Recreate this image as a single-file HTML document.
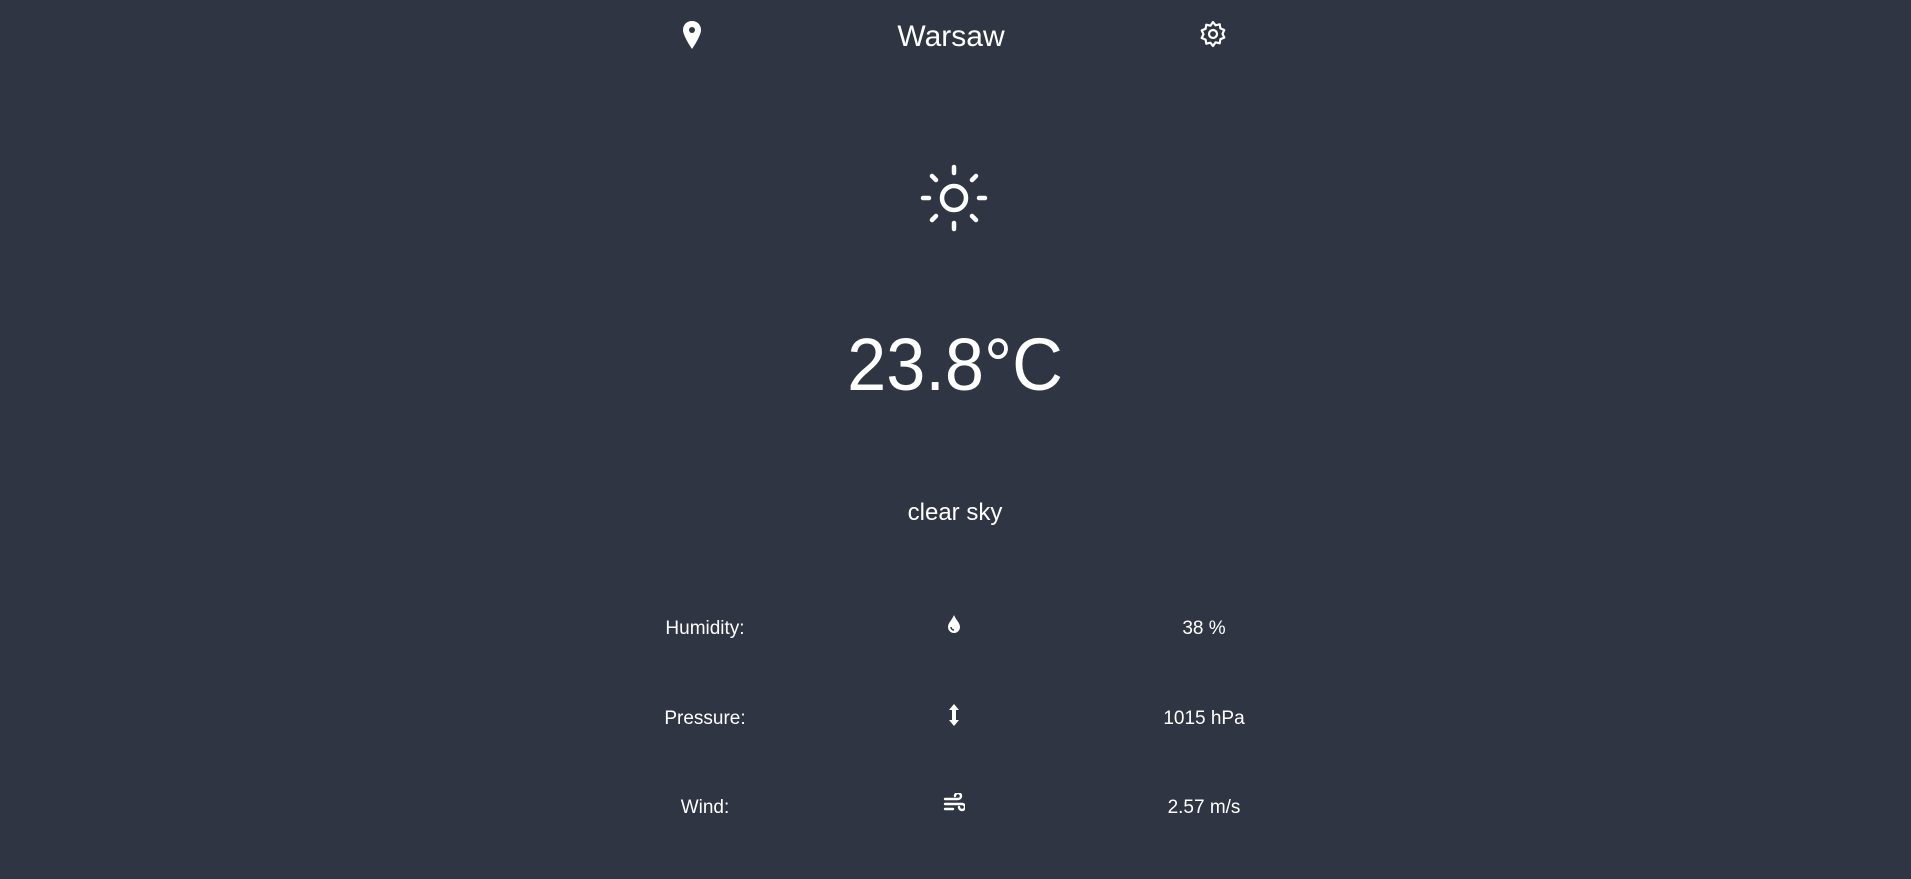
<!DOCTYPE html>
<html><head><meta charset="utf-8"><style>
html,body{margin:0;padding:0;background:#2f3542;width:1911px;height:879px;overflow:hidden;color:#fff;font-family:"Liberation Sans",sans-serif}
.a{position:absolute}
.c{transform:translateX(-50%);white-space:nowrap}
</style></head><body>
<svg class="a" style="left:680px;top:20px" width="24" height="30" viewBox="0 0 24 30"><path d="M12 1C6.5 1 3 5 3 10c0 6 9 19 9 19s9-13 9-19c0-5-3.5-9-9-9z" fill="#fff"/><circle cx="12" cy="10" r="3" fill="#2f3542"/></svg>
<div class="a c" style="left:951px;top:20px;font-size:30px">Warsaw</div>
<svg class="a" style="left:1199px;top:20px" width="28" height="28" viewBox="0 0 28 28"><path d="M14 2l2.6 3.3 4.1-1 .7 4.1 3.9 1.6-1.8 3.8 1.8 3.8-3.9 1.6-.7 4.1-4.1-1L14 26l-2.6-3.3-4.1 1-.7-4.1-3.9-1.6 1.8-3.8-1.8-3.8 3.9-1.6.7-4.1 4.1 1z" fill="none" stroke="#fff" stroke-width="2.2" stroke-linejoin="round"/><circle cx="14" cy="14" r="4" fill="none" stroke="#fff" stroke-width="2.2"/></svg>
<svg class="a" style="left:919px;top:163px" width="70" height="70" viewBox="0 0 70 70" stroke="#fff" stroke-width="4.5" stroke-linecap="round" fill="none"><circle cx="35" cy="35" r="12"/><path d="M35 4v6M35 60v6M4 35h6M60 35h6M13 13l4 4M53 53l4 4M57 13l-4 4M17 53l-4 4"/></svg>
<div class="a c" style="left:955px;top:320px;font-size:74px;line-height:90px;transform:translateX(-50%) scaleX(0.95)">23.8°C</div>
<div class="a c" style="left:955px;top:499px;font-size:24px">clear sky</div>
<div class="a c" style="left:705px;top:618px;font-size:19px">Humidity:</div>
<div class="a c" style="left:705px;top:708px;font-size:19px">Pressure:</div>
<div class="a c" style="left:705px;top:797px;font-size:19px">Wind:</div>
<div class="a c" style="left:1204px;top:618px;font-size:19px">38 %</div>
<div class="a c" style="left:1204px;top:708px;font-size:19px">1015 hPa</div>
<div class="a c" style="left:1204px;top:797px;font-size:19px">2.57 m/s</div>
<svg class="a" style="left:947px;top:614px" width="14" height="20" viewBox="0 0 14 20"><path d="M7 1C5 6 1 9 1 13a6 6 0 0012 0C13 9 9 6 7 1z" fill="#fff"/><path d="M4 13a3 3 0 003 3" stroke="#2f3542" stroke-width="1.5" fill="none"/></svg>
<svg class="a" style="left:948px;top:704px" width="12" height="22" viewBox="0 0 12 22"><path d="M6 0l5 6H8v10h3l-5 6-5-6h3V6H1z" fill="#fff"/></svg>
<svg class="a" style="left:943px;top:793px" width="22" height="20" viewBox="0 0 22 20" stroke="#fff" stroke-width="2.4" fill="none" stroke-linecap="round"><path d="M2 6h13a3 3 0 10-3-3M2 11h17a3 3 0 11-3 3M2 16h8"/></svg>
</body></html>
